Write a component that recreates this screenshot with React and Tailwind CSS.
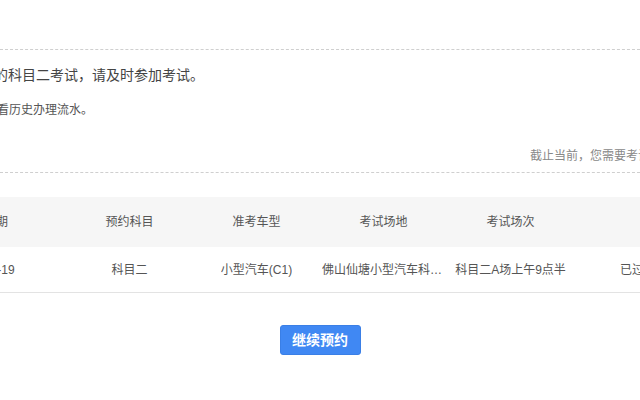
const columns = ["预约日期", "预约科目", "准考车型", "考试场地", "考试场次", "状态"];

const record = {
  date: "2019-06-19",
  subject: "科目二",
  carType: "小型汽车(C1)",
  site: "佛山仙塘小型汽车科目二考场",
  session: "科目二A场上午9点半",
  status: "已过预约考试时间",
};

function HistoryTable() {
  const cells = [record.date, record.subject, record.carType, record.site, record.session, record.status];

  return (
    <div className="ml-[-98px] w-[860px]">
      <div className="grid grid-cols-[164px_127px_127px_127px_127px_188px] h-[50px] bg-[#f6f6f6] text-[#555] text-[12px]">
        {columns.map((c) => (
          <div key={c} className="flex items-center justify-center whitespace-nowrap">
            {c}
          </div>
        ))}
      </div>
      <div className="grid grid-cols-[164px_127px_127px_127px_127px_188px] h-[46px] border-b border-[#e3e3e3] text-[#555] text-[12px]">
        {cells.map((c, i) => (
          <div key={i} className="flex items-center justify-center px-[2px] min-w-0">
            <span className="block truncate whitespace-nowrap">{c}</span>
          </div>
        ))}
      </div>
    </div>
  );
}

export default function App() {
  return (
    <div className="w-[640px] h-[400px] overflow-hidden bg-white font-['Liberation_Sans','Noto_Sans_CJK_SC',sans-serif]">
      <div className="h-[50px] border-b border-dashed border-[#cfcfcf]" />

      <p className="mt-[15px] ml-[-104px] leading-[20px] text-[14px] text-[#444] whitespace-nowrap">
        您有一场已预约的科目二考试，请及时参加考试。
      </p>
      <p className="mt-[15px] ml-[-123px] leading-[20px] text-[12px] text-[#555] whitespace-nowrap">
        您可以在办事记录中查看历史办理流水。
      </p>

      <div className="mt-[26px] pb-[6px] border-b border-dashed border-[#cfcfcf]">
        <p className="pl-[530px] leading-[20px] text-[12px] text-[#888] whitespace-nowrap">
          截止当前，您需要考试的科目还有1项。
        </p>
      </div>

      <div className="mt-[24px]">
        <HistoryTable />
      </div>

      <div className="mt-[32px] flex justify-center">
        <button className="w-[81px] h-[30px] rounded-[3px] bg-[#4088f3] border border-[#3a7fe6] text-white text-[14px] font-bold leading-none">
          继续预约
        </button>
      </div>
    </div>
  );
}
